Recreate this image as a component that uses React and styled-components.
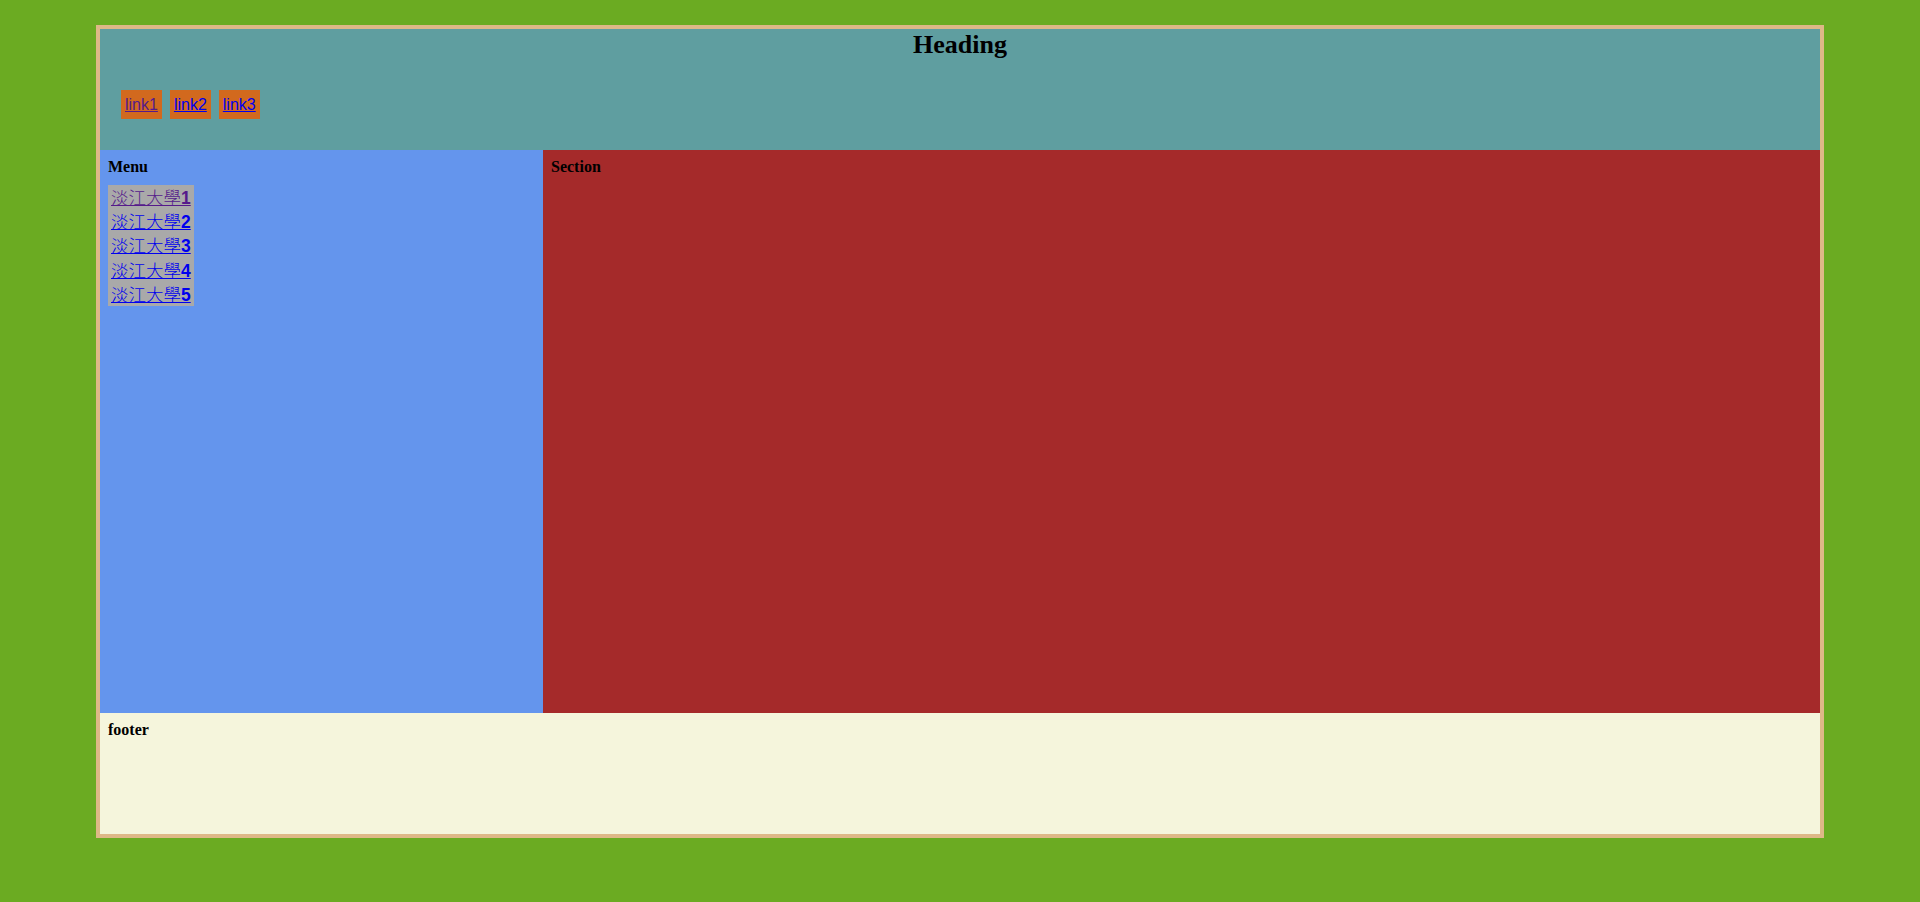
import styled, { createGlobalStyle } from "styled-components";

const GlobalStyle = createGlobalStyle`
  html, body {
    margin: 0;
    padding: 0;
    background-color: #6bab22;
  }
  body {
    font-family: "Liberation Serif", "Times New Roman", serif;
    font-size: 16px;
  }
`;

const Wrapper = styled.div`
  box-sizing: border-box;
  width: 90%;
  margin: 25px auto 0;
  border: 4px solid #deb887;
  display: grid;
  grid-template-rows: 121px 563px 121px;
`;

const Header = styled.header`
  background-color: #5f9ea0;
  padding-top: 1px;
`;

const Heading = styled.h1`
  margin: 0;
  text-align: center;
  font-size: 26px;
  font-weight: bold;
  color: #000;
`;

const Nav = styled.nav`
  display: flex;
  gap: 8px;
  margin-top: 30px;
  padding-left: 21px;
`;

const NavLink = styled.a`
  display: block;
  background-color: #d2691e;
  padding: 5px 4px;
  line-height: 19px;
  font-family: "Liberation Sans", Arial, sans-serif;
  font-size: 16px;
  color: ${(props) => (props.visited ? "#551a8b" : "#0000ee")};
  text-decoration: underline;
`;

const Main = styled.div`
  display: grid;
  grid-template-columns: 443px 1fr;
`;

const Menu = styled.aside`
  background-color: #6495ed;
  padding: 8px;
`;

const Section = styled.section`
  background-color: #a52a2a;
  padding: 8px;
`;

const Footer = styled.footer`
  background-color: #f5f5dc;
  padding: 8px;
`;

const Title = styled.div`
  font-weight: bold;
  font-size: 16px;
  color: #000;
`;

const MenuList = styled.ul`
  list-style: none;
  margin: 9px 0 0;
  padding: 0 3px;
  display: inline-flex;
  flex-direction: column;
  background-color: #a9a9a9;
`;

const MenuItem = styled.li`
  line-height: 24px;
  height: 24.2px;
`;

const MenuLink = styled.a`
  font-family: "Liberation Sans", Arial, "Noto Sans CJK TC", sans-serif;
  font-size: 17.5px;
  font-weight: bold;
  color: ${(props) => (props.visited ? "#551a8b" : "#0000ee")};
  text-decoration: underline;
`;

const Han = styled.span`
  font-family: "Noto Sans CJK TC", sans-serif;
  font-weight: 300;
`;

const links = [
  { label: "link1", visited: true },
  { label: "link2" },
  { label: "link3" },
];

const menuItems = [1, 2, 3, 4, 5];

const App = () => {
  return (
    <>
      <GlobalStyle />
      <Wrapper>
        <Header>
          <Heading>Heading</Heading>
          <Nav>
            {links.map((link) => (
              <NavLink key={link.label} href="#" visited={link.visited}>
                {link.label}
              </NavLink>
            ))}
          </Nav>
        </Header>
        <Main>
          <Menu>
            <Title>Menu</Title>
            <MenuList>
              {menuItems.map((n) => (
                <MenuItem key={n}>
                  <MenuLink href="#" visited={n === 1}>
                    <Han>淡江大學</Han>
                    {n}
                  </MenuLink>
                </MenuItem>
              ))}
            </MenuList>
          </Menu>
          <Section>
            <Title>Section</Title>
          </Section>
        </Main>
        <Footer>
          <Title>footer</Title>
        </Footer>
      </Wrapper>
    </>
  );
};

export default App;
